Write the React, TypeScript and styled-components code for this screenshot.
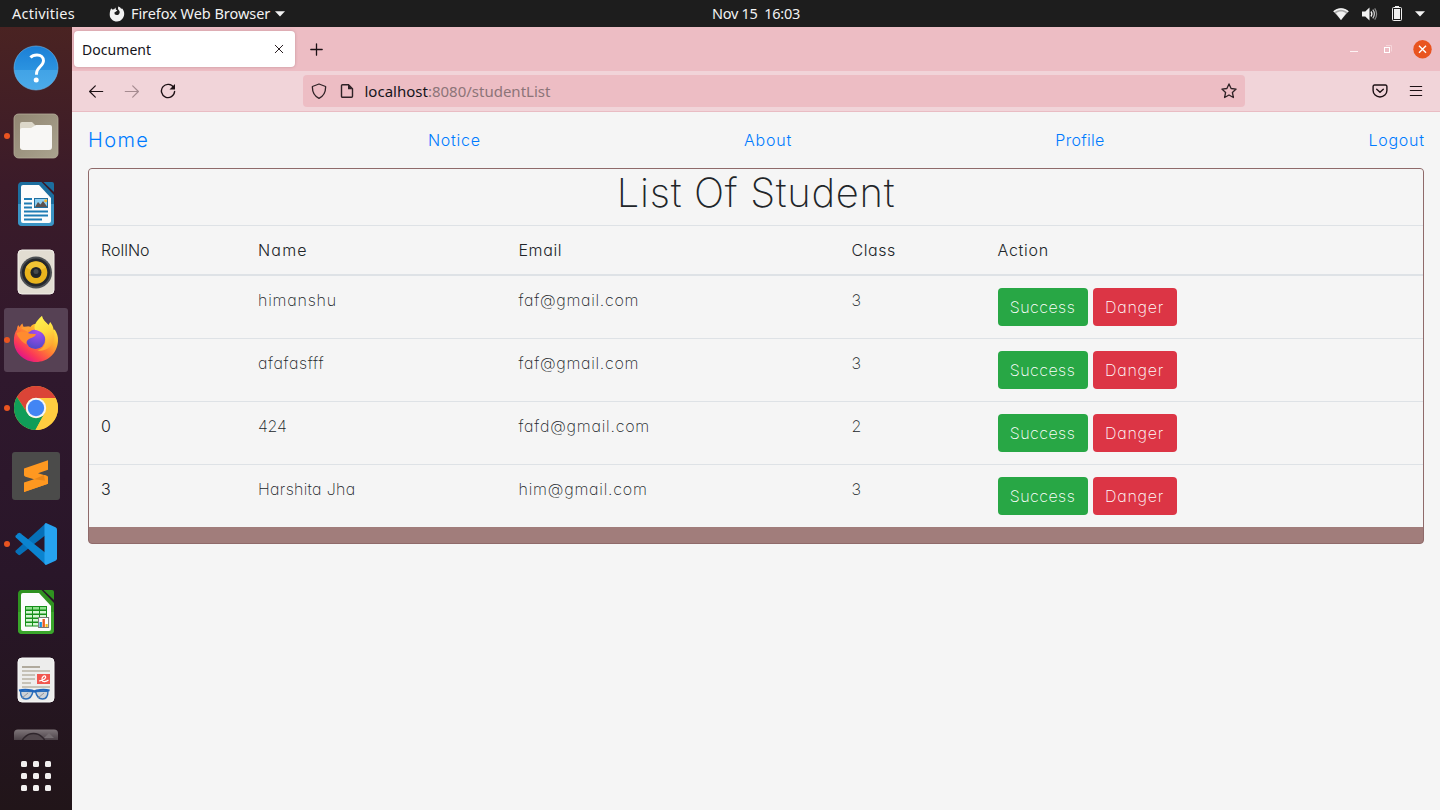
import React from "react";
import styled, { createGlobalStyle } from "styled-components";

const Global = createGlobalStyle`
  *, *::before, *::after { box-sizing: border-box; }
  body { margin: 0; overflow: hidden; background: #f5f5f5; }
  button { font: inherit; border: 0; padding: 0; background: none; }
`;

const ui = `"Noto Sans", "Open Sans", sans-serif`;
const page = `Inter, "Liberation Sans", sans-serif`;

const Desktop = styled.div`
  width: 1440px;
  height: 810px;
  display: flex;
  flex-direction: column;
  font-family: ${ui};
`;

const TopBar = styled.header`
  height: 27px;
  flex: none;
  display: grid;
  grid-template-columns: 700px auto 1fr;
  align-items: center;
  padding: 0 15px 0 12px;
  background: #1d1d1d;
  color: #f2f2f2;
  font-size: 14.5px;
  line-height: 27px;
`;

const TopLeft = styled.div`
  display: flex;
  align-items: center;
`;

const TopLabel = styled.span<{ $spacing?: number; $gap?: number }>`
  letter-spacing: ${(p) => p.$spacing ?? 0}px;
  margin-right: ${(p) => p.$gap ?? 0}px;
  white-space: nowrap;
`;

const Tray = styled.div`
  display: flex;
  justify-content: flex-end;
  align-items: center;
`;

const Body = styled.div`
  flex: 1;
  min-height: 0;
  display: flex;
`;

const Dock = styled.nav`
  width: 72px;
  flex: none;
  display: flex;
  flex-direction: column;
  background: linear-gradient(180deg, #4a2322 0%, #3b1b29 20%, #2f182d 45%, #291629 70%, #211519 100%);
`;

const DockList = styled.div`
  height: 713px;
  margin-bottom: 1px;
  padding: 9px 4px 0;
  display: flex;
  flex-direction: column;
  gap: 4px;
  overflow: hidden;
`;

const DockItem = styled.div<{ $active?: boolean; $running?: boolean }>`
  width: 64px;
  height: 64px;
  flex: none;
  display: grid;
  place-items: center;
  position: relative;
  border-radius: 3px;
  background: ${(p) => (p.$active ? "#564154" : "transparent")};
  &::before {
    content: "";
    display: ${(p) => (p.$running ? "block" : "none")};
    position: absolute;
    left: 0;
    top: 29px;
    width: 6px;
    height: 6px;
    border-radius: 50%;
    background: #e95420;
  }
`;

const AppsButton = styled.div`
  display: grid;
  grid-template-columns: repeat(3, 6px);
  gap: 6px;
  justify-content: center;
  padding-top: 20px;
`;

const AppsDot = styled.i`
  height: 6px;
  border-radius: 1.5px;
  background: #f2f0f0;
`;

const Browser = styled.section`
  flex: 1;
  min-width: 0;
  display: flex;
  flex-direction: column;
`;

const TabStrip = styled.div`
  height: 44px;
  flex: none;
  display: flex;
  align-items: center;
  padding: 0 8px 0 2px;
  background: #edbdc4;
`;

const Tab = styled.div`
  width: 221px;
  height: 36px;
  display: flex;
  align-items: center;
  justify-content: space-between;
  padding: 0 11px 0 8px;
  margin-right: 15px;
  border-radius: 4px;
  background: #fff;
  box-shadow: 0 0 3px rgba(120, 60, 70, 0.35);
  color: #15141a;
  font-size: 14px;
  letter-spacing: 0.05px;
`;

const WindowControls = styled.div`
  margin-left: auto;
  display: flex;
  align-items: center;
`;

const Toolbar = styled.div`
  height: 41px;
  flex: none;
  display: flex;
  align-items: center;
  padding: 0 16px;
  background: #f1d4d9;
  border-bottom: 1px solid #e9bcc3;
`;

const NavButtons = styled.div`
  width: 215px;
  display: flex;
  align-items: center;
  gap: 20px;
`;

const AddressBar = styled.div`
  width: 942px;
  height: 32px;
  display: flex;
  align-items: center;
  padding: 0 8px;
  border-radius: 4px;
  background: #edbdc4;
`;

const Url = styled.span`
  flex: 1;
  margin-left: 9.5px;
  font-size: 15px;
  line-height: 20px;
  color: #8c7478;
  b {
    font-weight: 400;
    color: #15141a;
  }
`;

const ToolbarEnd = styled.div`
  margin-left: auto;
  display: flex;
  gap: 20px;
`;

const Page = styled.main`
  flex: 1;
  background: #f5f5f5;
  font-family: ${page};
  font-feature-settings: "cv11" 1, "ss03" 1;
  font-weight: 200;
  font-size: 16px;
  line-height: 24px;
  color: #212529;
  padding: 0 16px;
`;

const SiteNav = styled.nav`
  height: 56px;
  display: flex;
  align-items: center;
  justify-content: space-between;
`;

const SiteLink = styled.a<{ $brand?: boolean; $spacing?: number }>`
  color: #007bff;
  font-weight: 300;
  font-size: ${(p) => (p.$brand ? 20 : 16)}px;
  letter-spacing: ${(p) => p.$spacing ?? 0}px;
  margin-right: ${(p) => (p.$brand ? 16 : 0) - (p.$spacing ?? 0)}px;
`;

const Card = styled.section`
  border: 1px solid #8f6a6a;
  border-radius: 4px;
  background: #a17d7b;
  padding-bottom: 16px;
  overflow: hidden;
`;

const Title = styled.h1`
  height: 56px;
  margin: 0;
  background: #f5f5f5;
  text-align: center;
  font-weight: 200;
  font-size: 40px;
  line-height: 48px;
  letter-spacing: 0.7px;
`;

const Table = styled.table`
  width: 100%;
  table-layout: fixed;
  border-collapse: separate;
  border-spacing: 0;
  background: #f5f5f5;
  text-align: left;
`;

const HeadCell = styled.th<{ $w?: number; $spacing?: number }>`
  width: ${(p) => (p.$w ? `${p.$w}px` : "auto")};
  height: 51px;
  padding: 12px;
  border-top: 1px solid #dee2e6;
  border-bottom: 2px solid #dee2e6;
  font-weight: 300;
  letter-spacing: ${(p) => p.$spacing ?? 0}px;
`;

const Cell = styled.td<{ $strong?: boolean; $spacing?: number }>`
  padding: 12px;
  vertical-align: top;
  font-weight: ${(p) => (p.$strong ? 300 : 200)};
  letter-spacing: ${(p) => p.$spacing ?? 0}px;
  tr + tr > & {
    border-top: 1px solid #dee2e6;
  }
`;

const Actions = styled.div`
  display: flex;
  gap: 5px;
`;

const ActionButton = styled.button<{ $tone: "success" | "danger" }>`
  width: ${(p) => (p.$tone === "success" ? 90 : 84)}px;
  height: 38px;
  border-radius: 4px;
  background: ${(p) => (p.$tone === "success" ? "#28a745" : "#dc3545")};
  color: #fff;
  font-weight: 200;
  letter-spacing: ${(p) => (p.$tone === "success" ? 0.45 : 0.75)}px;
  white-space: nowrap;
`;

const HelpIcon = () => (
  <svg width="46" height="46" viewBox="0 0 46 46">
    <defs>
      <linearGradient id="help" x1="0" y1="0" x2="0" y2="1">
        <stop offset="0" stopColor="#1b7fd6" />
        <stop offset="0.54" stopColor="#2b93e0" />
        <stop offset="0.55" stopColor="#41a3e6" />
        <stop offset="1" stopColor="#4cabea" />
      </linearGradient>
    </defs>
    <circle cx="23" cy="23" r="22" fill="url(#help)" stroke="#6dbbee" strokeWidth="0.6" />
    <path d="M17.500 12.500C19 10.700 21.300 10 24 10c4 0 6.500 2.200 6.500 5.700 0 5.400-7 6.500-7 13v1" fill="none" stroke="#fff" strokeWidth="2.900" />
    <circle cx="23.200" cy="35" r="2.500" fill="#fff" />
  </svg>
);

const FilesIcon = () => (
  <svg width="46" height="46" viewBox="0 0 46 46">
    <defs>
      <linearGradient id="files" x1="0" y1="0" x2="1" y2="1">
        <stop offset="0" stopColor="#918672" />
        <stop offset="1" stopColor="#aaa38f" />
      </linearGradient>
    </defs>
    <rect x="1" y="1" width="44" height="44" rx="4.500" fill="url(#files)" stroke="#b5ad9a" strokeWidth="0.800" />
    <path d="M7 35V11a2 2 0 0 1 2-2h10l4 4h14v20z" fill="#dcd7c9" />
    <path d="M7 17q0-2 2-2h9l5-3h14a2 2 0 0 1 2 2v20a3 3 0 0 1-3 3H10a3 3 0 0 1-3-3z" fill="#f8f7f5" />
  </svg>
);

const LibrePage = ({ dark, light, children }: { dark: string; light: string; children: React.ReactNode }) => (
  <svg width="40" height="46" viewBox="0 0 40 46">
    <path d="M5 1h20.500L38 14v27a4 4 0 0 1-4 4H6a4 4 0 0 1-4-4V5a4 4 0 0 1 3-4z" fill={dark} />
    <path d="M2 23h36v18a4 4 0 0 1-4 4H6a4 4 0 0 1-4-4z" fill={light} />
    <path d="M7 4h16L35 17v23a2 2 0 0 1-2 2H7a2 2 0 0 1-2-2V6a2 2 0 0 1 2-2z" fill="#fcfcfc" />
    <path d="M27.500 1h8.500a2 2 0 0 1 2 2v8z" fill={dark} />
    {children}
  </svg>
);

const WriterIcon = () => (
  <LibrePage dark="#1c6e9f" light="#3b94c5">
    <path d="M8 18h8M8 22.500h8M8 26.500h8M8 30.500h24M8 34.500h24M8 38.500h18" stroke="#1f7cb4" strokeWidth="1.800" />
    <rect x="18.500" y="17.500" width="13" height="9" fill="#8ed0f2" stroke="#1f6ea0" />
    <path d="M19 26l3-5 2.500 2.500L27 20l4.500 6z" fill="#5b5350" />
    <circle cx="29.700" cy="19.700" r="1.500" fill="#f8b52a" />
  </LibrePage>
);

const CalcIcon = () => (
  <LibrePage dark="#2f9220" light="#3aa62b">
    <rect x="9" y="17" width="22" height="20.500" fill="#16901a" />
    {[18, 22, 26, 30, 34].map((y) => (
      <path key={y} d={`M10 ${y + 1.3}h6M17 ${y + 1.3}h6M24 ${y + 1.3}h6`} stroke={y === 18 ? "#8fe08c" : "#d4f7d2"} strokeWidth="2.600" />
    ))}
    <rect x="22.600" y="28.500" width="10" height="10" fill="#fff" stroke="#777" />
    <path d="M24.700 38v-5" stroke="#1795dc" strokeWidth="2.400" />
    <path d="M27.700 38v-8" stroke="#ea5b23" strokeWidth="2.400" />
    <path d="M30.600 38v-3" stroke="#f5bd18" strokeWidth="2.200" />
  </LibrePage>
);

const SpeakerIcon = () => (
  <svg width="38" height="46" viewBox="0 0 38 46">
    <rect x="1" y="1" width="36" height="44" rx="4" fill="#e2ddd2" stroke="#f2efe9" />
    <circle cx="19" cy="23.500" r="16" fill="#4e5154" />
    <circle cx="19" cy="23.500" r="14" fill="#25282c" />
    <circle cx="19" cy="23.500" r="11.300" fill="#e9b41d" />
    <path d="M19 23.500L9 18.500a11.300 11.300 0 0 1 20 0z" fill="#f2c535" />
    <circle cx="19" cy="23.500" r="5.500" fill="#222529" />
    <circle cx="19" cy="22.500" r="2.500" fill="#464a4d" />
  </svg>
);

const FirefoxIcon = () => (
  <svg width="46" height="48" viewBox="0 0 46 48">
    <defs>
      <linearGradient id="fxBody" x1="0.850" y1="0.150" x2="0.250" y2="0.950">
        <stop offset="0" stopColor="#fff04a" />
        <stop offset="0.300" stopColor="#ffb72e" />
        <stop offset="0.550" stopColor="#ff7a35" />
        <stop offset="0.800" stopColor="#fb3b55" />
        <stop offset="1" stopColor="#e31587" />
      </linearGradient>
      <radialGradient id="fxGlobe" cx="0.600" cy="0.150" r="0.850">
        <stop offset="0" stopColor="#a94df2" />
        <stop offset="1" stopColor="#5349c8" />
      </radialGradient>
      <linearGradient id="fxFlame" x1="0.400" y1="0" x2="0.700" y2="1">
        <stop offset="0" stopColor="#fff14e" />
        <stop offset="0.450" stopColor="#ffdb3f" />
        <stop offset="1" stopColor="#ff9a30" />
      </linearGradient>
    </defs>
    <path d="M9.500 7.500c.2 2 1 3 1.800 4.200 2-1 4-1.200 6-.6C19 8.500 21 8 23 8l6-8c.5 4 4.500 6 6.500 9l1.700-3c2 2.500 3 5 3.500 8l1-.5C44 17 45.300 20.500 45 25 44.300 37.500 34.500 46 23 46S1 37 .9 25c-.1-5 1-8.500 3-11.500.2-2 .5-3 1.500-4.500.4 1 .7 1.500 1.500 2 .4-1.500 1.200-2.500 2.600-3.500z" fill="url(#fxBody)" />
    <circle cx="22.500" cy="23.300" r="9.700" fill="url(#fxGlobe)" />
    <path d="M29 0c-6 5-8.500 9.500-7 14 5 .500 10 4 10.500 9 .5 6-3 10-8 11.500 9 1 15-4 16.500-11C42.500 17 40 12 37 8l-1.500 1.500C33 6.500 29.500 4 29 0z" fill="url(#fxFlame)" />
    <path d="M3.500 17c4.500-2.500 8.500-1.800 12 .2 2.500.8 5 .5 7.500.8-1 3.200-4 3.500-6.500 4.700-2.300 1.200-3.500 3-3 5.800-4-2-8.500-7-10-11.500z" fill="#ff8b2f" />
    <path d="M8 12c3-1.300 6-1.800 9.500-1-2 1.500-3 3.500-2.500 5-2.500-1.800-5-2.500-7-4z" fill="#ff9e33" />
  </svg>
);

const ChromeIcon = () => (
  <svg width="46" height="46" viewBox="0 0 46 46">
    <circle cx="23" cy="23" r="22" fill="#fcc934" />
    <path d="M3.950 12A22 22 0 0 1 42.050 12L42.500 13H23a10 10 0 0 0-8.700 15z" fill="#db4437" />
    <path d="M3.950 12A22 22 0 0 0 22.500 45L31.700 28A10 10 0 0 1 14.300 28z" fill="#109d58" />
    <path d="M23 13h19.600a22 22 0 0 1-20.100 32l9.200-17A10 10 0 0 0 23 13z" fill="#ffcd40" />
    <circle cx="23" cy="23" r="10.200" fill="#f5f5f5" />
    <circle cx="23" cy="23" r="8.200" fill="#4285f4" />
  </svg>
);

const SublimeIcon = () => (
  <svg width="48" height="48" viewBox="0 0 48 48">
    <rect width="48" height="48" rx="3" fill="#4b4b4a" />
    <path d="M36 8.300V17.800L26 21.200 34.500 23.800Q36 24.300 36 25.500V31.700L12 40V30.500L22 27.300 13.500 24.700Q12 24.200 12 23V16.500z" fill="#ff9820" />
    <path d="M36 25.500V29L22 27.300l10-4.200z" fill="#e98618" />
    <path d="M32 23l2.500.8Q36 24.300 36 25.500V31.700L12 40v-3.500L33 29.500z" fill="#ff9820" />
  </svg>
);

const VsCodeIcon = () => (
  <svg width="44" height="44" viewBox="0 0 44 44">
    <path d="M32 1L1.800 28.500q-1 1 0 2l2.500 2.300q1 .7 2 0L33 12z" fill="#0670b8" />
    <path d="M1.800 13.500l2.500-2.300q1-.7 2 0L33 32l-1 11L1.800 15.500q-1-1 0-2z" fill="#0b84d0" />
    <path d="M32 1l9.500 4.300q1.500.7 1.500 2.200v29q0 1.500-1.500 2.200L32 43q-1.500-.5-1.500-2V3q0-1.500 1.500-2z" fill="#26a3f0" />
  </svg>
);

const ReaderIcon = () => (
  <svg width="38" height="46" viewBox="0 0 38 46">
    <rect x="1" y="1" width="36" height="44" rx="4" fill="#ededec" stroke="#f8f8f8" />
    <path d="M5 10h18" stroke="#aaa395" strokeWidth="1.800" />
    <path d="M5 14h28M5 18h13M5 22h13M5 26h9M5 30h28" stroke="#c6c1b6" strokeWidth="1.800" />
    <rect x="20" y="17" width="13" height="10" fill="#f1564f" />
    <path d="M22 24c5-1 7.500-3 6.500-4.700-1-1.300-4 .7-3.500 3.700.4 2.500 4 2 6.500 0" fill="none" stroke="#fff" strokeWidth="1.200" />
    <path d="M3.500 34c0 5.500 2 8 5.500 8s6-3 7-7.500zM31 34c0 5.500-2 8-5.500 8s-6-3-7-7.500z" fill="#cdd2d8" stroke="#2b6db9" strokeWidth="1.400" />
    <path d="M2 33.500q6-1.500 13 0l2.300 1 2.300-1q7-1.500 13 0" fill="none" stroke="#1f64bb" strokeWidth="2.200" />
    <path d="M5 41l6-5M21 41l6-5" stroke="#8a8f96" strokeWidth="0.900" />
  </svg>
);

const CameraIcon = () => (
  <svg width="46" height="38" viewBox="0 0 46 38">
    <defs>
      <linearGradient id="cam" x1="0" y1="0" x2="0" y2="0.300">
        <stop offset="0" stopColor="#7f767a" />
        <stop offset="1" stopColor="#493f45" />
      </linearGradient>
    </defs>
    <rect x="1" y="0.500" width="44" height="37" rx="4" fill="url(#cam)" />
    <circle cx="20.500" cy="17" r="12.500" fill="#51474c" stroke="#2e252b" strokeWidth="1.500" />
    <path d="M31 9l5-5 5 5z" fill="#756d71" />
  </svg>
);

const dockItems: { name: string; icon: React.ReactNode; running?: boolean; active?: boolean }[] = [
  { name: "help", icon: <HelpIcon /> },
  { name: "files", icon: <FilesIcon />, running: true },
  { name: "writer", icon: <WriterIcon /> },
  { name: "rhythmbox", icon: <SpeakerIcon /> },
  { name: "firefox", icon: <FirefoxIcon />, running: true, active: true },
  { name: "chrome", icon: <ChromeIcon />, running: true },
  { name: "sublime", icon: <SublimeIcon /> },
  { name: "vscode", icon: <VsCodeIcon />, running: true },
  { name: "calc", icon: <CalcIcon /> },
  { name: "reader", icon: <ReaderIcon /> },
  { name: "camera", icon: <CameraIcon /> },
];

const Glyph = styled.svg<{ $gap?: number }>`
  flex: none;
  margin-right: ${(p) => p.$gap ?? 0}px;
`;

const FirefoxGlyph = () => (
  <Glyph width="16" height="16" viewBox="0 0 16 16" $gap={6}>
    <path d="M2.200 2.200l.9 1.300 2-.3L6.600 1.500l.2 2 1.600 1-1.700 1.300-1.300.8.3 1.700c1.800 1.500 4.800.6 5-1.900.1-1.700-1.200-2.600-1.700-3.500L9.200.5c2 .4 2.500 1.500 3 2.400l.7-.6c1.500 1.500 2.500 3.500 2.300 6-.3 4-3.300 7.200-7.200 7.200S.8 12.500.7 8.700C.7 6 1.200 4 2.200 2.200z" fill="#f2f2f2" />
  </Glyph>
);

const Caret = () => (
  <Glyph width="10" height="6" viewBox="0 0 10 6">
    <path d="M0 .3h10L5 5.500z" fill="#f2f2f2" />
  </Glyph>
);

const WifiIcon = () => (
  <Glyph width="16" height="14" viewBox="0 0 16 14" $gap={13}>
    <path d="M.3 4.200C4.800.2 11.200.2 15.700 4.200L8 13z" fill="#a9a9a9" />
    <path d="M.3 4.200C4.800.2 11.200.2 15.700 4.200l-1 1.100C10.800 1.800 5.200 1.800 1.300 5.300zM3 6.300c3-2.300 7-2.300 10 0L8 13z" fill="#f2f2f2" />
  </Glyph>
);

const VolumeIcon = () => (
  <Glyph width="16" height="14" viewBox="0 0 16 14" $gap={14}>
    <path d="M0 4.500h3.300L7.500.5v13L3.300 9.500H0z" fill="#f2f2f2" />
    <path d="M9 4.500q1.800 2.500 0 5" fill="none" stroke="#f2f2f2" strokeWidth="1.300" />
    <path d="M10.800 2.700q3.200 4.300 0 8.600" fill="none" stroke="#c4c4c4" strokeWidth="1.300" />
    <path d="M12.700 1.300q3.800 5.700 0 11.400" fill="none" stroke="#8a8a8a" strokeWidth="1.200" />
  </Glyph>
);

const BatteryIcon = () => (
  <Glyph width="10" height="16" viewBox="0 0 10 16" $gap={13}>
    <path d="M3 0h4v1.500H3z" fill="#f2f2f2" />
    <rect x="0.500" y="1.500" width="9" height="13" rx="1" fill="none" stroke="#f2f2f2" />
    <rect x="2" y="3" width="6" height="10" fill="#f2f2f2" />
  </Glyph>
);

const Stroke = ({ d, size = 16, w = 1.3, color = "#1c1014", gap = 0 }: { d: string; size?: number; w?: number; color?: string; gap?: number }) => (
  <Glyph width={size} height={size} viewBox="0 0 16 16" $gap={gap}>
    <path d={d} fill="none" stroke={color} strokeWidth={w} strokeLinecap="round" strokeLinejoin="round" />
  </Glyph>
);

const ReloadIcon = () => (
  <Glyph width="16" height="16" viewBox="0 0 16 16">
    <path d="M13.700 4.600A6.600 6.600 0 1 0 14.600 8.500" fill="none" stroke="#1c1014" strokeWidth="1.400" strokeLinecap="round" />
    <path d="M15 1v5.500H9.500z" fill="#1c1014" />
  </Glyph>
);

const FileIcon = () => (
  <Glyph width="16" height="16" viewBox="0 0 16 16">
    <path d="M3.500 1.700h6l4 4v7.600a1 1 0 0 1-1 1h-9a1 1 0 0 1-1-1V2.700a1 1 0 0 1 1-1z" fill="none" stroke="#2f2226" strokeWidth="1.400" />
    <path d="M9 1.500v4.700h4.700z" fill="#2f2226" />
  </Glyph>
);

const WindowGlyphs = () => (
  <Glyph width="60" height="12" viewBox="0 0 60 12" $gap={3}>
    <path d="M0 8.500h8" stroke="#fdf3f4" />
    <path d="M36 2.500h5.500v6" fill="none" stroke="#f5d5d9" />
    <rect x="34.500" y="4.500" width="5" height="5" fill="none" stroke="#fff" />
  </Glyph>
);

const CloseWindow = () => (
  <Glyph width="19" height="19" viewBox="0 0 19 19">
    <circle cx="9.500" cy="9.300" r="9.200" fill="#e95420" />
    <path d="M6 5.800l7 7M13 5.800l-7 7" stroke="#fff" strokeWidth="1.400" />
  </Glyph>
);

const students = [
  { roll: "", name: "himanshu", nameSpacing: 0.8, email: "faf@gmail.com", emailSpacing: 0.7, grade: "3" },
  { roll: "", name: "afafasfff", nameSpacing: 0.6, email: "faf@gmail.com", emailSpacing: 0.7, grade: "3" },
  { roll: "0", name: "424", nameSpacing: -0.2, email: "fafd@gmail.com", emailSpacing: 0.78, grade: "2" },
  { roll: "3", name: "Harshita Jha", nameSpacing: 0.3, email: "him@gmail.com", emailSpacing: 0.78, grade: "3" },
];

export default function App() {
  return (
    <Desktop>
      <Global />
      <TopBar>
        <TopLeft>
          <TopLabel $gap={34} $spacing={0.25}>Activities</TopLabel>
          <FirefoxGlyph />
          <TopLabel $gap={5} $spacing={-0.05}>Firefox Web Browser</TopLabel>
          <Caret />
        </TopLeft>
        <TopLabel $spacing={-0.3}>Nov 15&nbsp; 16:03</TopLabel>
        <Tray>
          <WifiIcon />
          <VolumeIcon />
          <BatteryIcon />
          <Caret />
        </Tray>
      </TopBar>
      <Body>
        <Dock>
          <DockList>
            {dockItems.map((item) => (
              <DockItem key={item.name} $running={item.running} $active={item.active}>
                {item.icon}
              </DockItem>
            ))}
          </DockList>
          <AppsButton>
            {Array.from({ length: 9 }, (_, i) => (
              <AppsDot key={i} />
            ))}
          </AppsButton>
        </Dock>
        <Browser>
          <TabStrip>
            <Tab>
              Document
              <Stroke d="M2 2l12 12M14 2l-12 12" size={10} w={1.5} />
            </Tab>
            <Stroke d="M8 1v14M1 8h14" size={13} w={1.6} />
            <WindowControls>
              <WindowGlyphs />
              <CloseWindow />
            </WindowControls>
          </TabStrip>
          <Toolbar>
            <NavButtons>
              <Stroke d="M14.700 8.500H1.700M7.300 2.800L1.600 8.500l5.700 5.700" w={1.2} />
              <Stroke d="M1.300 8.500h13M8.700 2.800L14.400 8.500l-5.700 5.700" w={1.2} color="#a58b90" />
              <ReloadIcon />
            </NavButtons>
            <AddressBar>
              <Stroke d="M8 1L14.600 3.500C14.800 9 12.500 13 8 15.300 3.500 13 1.200 9 1.400 3.500z" gap={12} color="#2f2226" />
              <FileIcon />
              <Url>
                <b>localhost</b>:8080/studentList
              </Url>
              <Stroke d="M8 .9l2.100 4.600 5 .6-3.700 3.400 1 5L8 12l-4.400 2.500 1-5L.9 6.100l5-.6z" color="#2f2226" />
            </AddressBar>
            <ToolbarEnd>
              <Stroke d="M2.500 2h11a1.400 1.400 0 0 1 1.400 1.400V7.500A6.900 6.500 0 0 1 1.100 7.500V3.400A1.400 1.400 0 0 1 2.500 2zM4.700 6.200L8 9.300l3.300-3.100" w={1.4} />
              <Stroke d="M2.300 3.500h11.400M2.300 7.500h11.400M2.300 12.500h11.400" w={1.1} />
            </ToolbarEnd>
          </Toolbar>
          <Page>
            <SiteNav>
              <SiteLink $brand $spacing={1.4}>Home</SiteLink>
              <SiteLink $spacing={0.75}>Notice</SiteLink>
              <SiteLink $spacing={0.8}>About</SiteLink>
              <SiteLink $spacing={0.3}>Profile</SiteLink>
              <SiteLink $spacing={0.75}>Logout</SiteLink>
            </SiteNav>
            <Card>
              <Title>List Of Student</Title>
              <Table>
                <thead>
                  <tr>
                    <HeadCell $w={157}>RollNo</HeadCell>
                    <HeadCell $w={260.5} $spacing={1.2}>Name</HeadCell>
                    <HeadCell $w={333} $spacing={0.6}>Email</HeadCell>
                    <HeadCell $w={146} $spacing={0.55}>Class</HeadCell>
                    <HeadCell $spacing={0.7}>Action</HeadCell>
                  </tr>
                </thead>
                <tbody>
                  {students.map((s, i) => (
                    <tr key={i}>
                      <Cell $strong>{s.roll}</Cell>
                      <Cell $spacing={s.nameSpacing}>{s.name}</Cell>
                      <Cell $spacing={s.emailSpacing}>{s.email}</Cell>
                      <Cell>{s.grade}</Cell>
                      <Cell>
                        <Actions>
                          <ActionButton $tone="success">Success</ActionButton>
                          <ActionButton $tone="danger">Danger</ActionButton>
                        </Actions>
                      </Cell>
                    </tr>
                  ))}
                </tbody>
              </Table>
            </Card>
          </Page>
        </Browser>
      </Body>
    </Desktop>
  );
}
